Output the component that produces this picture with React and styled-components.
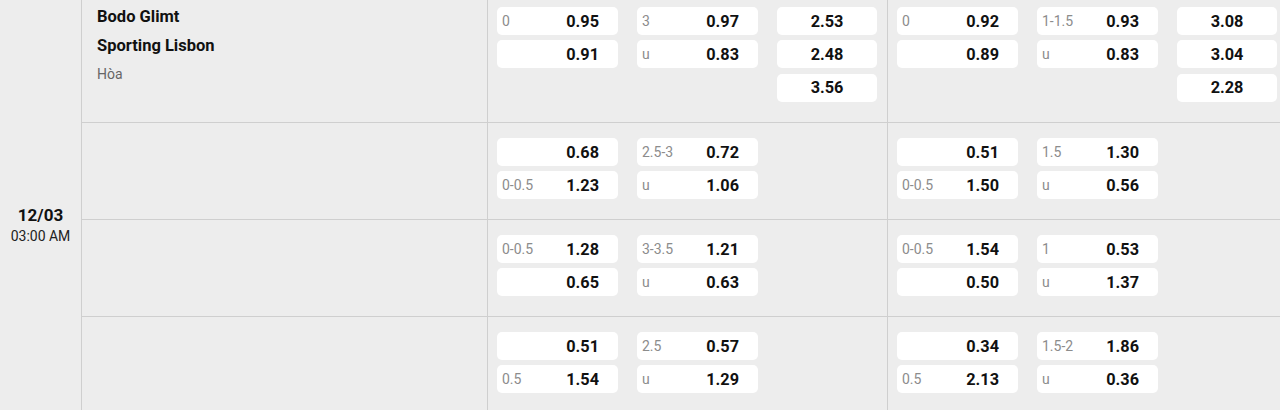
import React from "react";
import styled, { createGlobalStyle } from "styled-components";

const Global = createGlobalStyle`
  html, body { margin: 0; padding: 0; background: #ededed; }
  body { font-family: Roboto, "Liberation Sans", Arial, sans-serif; color: #111; }
  * { box-sizing: border-box; }
`;

const Page = styled.div`
  display: flex;
  width: 1280px;
  height: 410px;
  overflow: hidden;
  background: #ededed;
`;

const DateCol = styled.div`
  flex: 0 0 81px;
  display: flex;
  flex-direction: column;
  align-items: center;
  padding-top: 204px;
`;

const DateDay = styled.div`
  font-size: 17px;
  font-weight: 700;
  line-height: 23px;
  color: #111;
`;

const DateTime = styled.div`
  font-size: 14px;
  line-height: 18px;
  color: #222;
`;

const Rows = styled.div`
  flex: 1;
  display: flex;
  flex-direction: column;
  min-width: 0;
`;

const Row = styled.div`
  display: grid;
  grid-template-columns: 406px 400px 400px;
  height: ${(p) => p.$h}px;
  flex: 0 0 auto;
  border-bottom: 1px solid #cfcfcf;
`;

const TeamCell = styled.div`
  border-left: 1px solid #cfcfcf;
  padding: 2px 0 0 15px;
`;

const TeamName = styled.div`
  font-size: 16.5px;
  font-weight: 700;
  line-height: 29px;
  color: #111;
`;

const DrawLabel = styled.div`
  font-size: 14px;
  line-height: 29px;
  color: #666;
`;

const MarketCell = styled.div`
  border-left: 1px solid #cfcfcf;
  display: grid;
  grid-template-columns: 121px 121px 100px;
  column-gap: 19px;
  align-items: start;
  padding: ${(p) => p.$top}px 0 0 9px;
`;

const OddsCol = styled.div`
  display: flex;
  flex-direction: column;
  gap: 5.4px;
`;

const OddBox = styled.div`
  height: 28px;
  background: #fff;
  border-radius: 5px;
  display: flex;
  align-items: center;
  justify-content: ${(p) => (p.$center ? "center" : "space-between")};
  padding: ${(p) => (p.$center ? "0" : "0 19px 0 5px")};
`;

const OddLabel = styled.span`
  font-size: 14px;
  color: #8c8c8c;
`;

const OddValue = styled.span`
  font-size: 16.3px;
  font-weight: 700;
  color: #111;
`;

const rows = [
  {
    h: 123,
    top: 7,
    teams: true,
    markets: [
      {
        a: [["0", "0.95"], ["", "0.91"]],
        b: [["3", "0.97"], ["u", "0.83"]],
        c: ["2.53", "2.48", "3.56"],
      },
      {
        a: [["0", "0.92"], ["", "0.89"]],
        b: [["1-1.5", "0.93"], ["u", "0.83"]],
        c: ["3.08", "3.04", "2.28"],
      },
    ],
  },
  {
    h: 97,
    top: 15,
    markets: [
      { a: [["", "0.68"], ["0-0.5", "1.23"]], b: [["2.5-3", "0.72"], ["u", "1.06"]] },
      { a: [["", "0.51"], ["0-0.5", "1.50"]], b: [["1.5", "1.30"], ["u", "0.56"]] },
    ],
  },
  {
    h: 97,
    top: 15,
    markets: [
      { a: [["0-0.5", "1.28"], ["", "0.65"]], b: [["3-3.5", "1.21"], ["u", "0.63"]] },
      { a: [["0-0.5", "1.54"], ["", "0.50"]], b: [["1", "0.53"], ["u", "1.37"]] },
    ],
  },
  {
    h: 97,
    top: 15,
    markets: [
      { a: [["", "0.51"], ["0.5", "1.54"]], b: [["2.5", "0.57"], ["u", "1.29"]] },
      { a: [["", "0.34"], ["0.5", "2.13"]], b: [["1.5-2", "1.86"], ["u", "0.36"]] },
    ],
  },
];

function Pair({ items }) {
  return (
    <OddsCol>
      {items.map(([l, v], i) => (
        <OddBox key={i}>
          <OddLabel>{l}</OddLabel>
          <OddValue>{v}</OddValue>
        </OddBox>
      ))}
    </OddsCol>
  );
}

function Market({ m, top }) {
  return (
    <MarketCell $top={top}>
      <Pair items={m.a} />
      <Pair items={m.b} />
      {m.c ? (
        <OddsCol>
          {m.c.map((v, i) => (
            <OddBox key={i} $center>
              <OddValue>{v}</OddValue>
            </OddBox>
          ))}
        </OddsCol>
      ) : (
        <div />
      )}
    </MarketCell>
  );
}

export default function App() {
  return (
    <>
      <Global />
      <Page>
        <DateCol>
          <DateDay>12/03</DateDay>
          <DateTime>03:00 AM</DateTime>
        </DateCol>
        <Rows>
          {rows.map((r, i) => (
            <Row key={i} $h={r.h}>
              <TeamCell>
                {r.teams && (
                  <>
                    <TeamName>Bodo Glimt</TeamName>
                    <TeamName>Sporting Lisbon</TeamName>
                    <DrawLabel>Hòa</DrawLabel>
                  </>
                )}
              </TeamCell>
              {r.markets.map((m, j) => (
                <Market key={j} m={m} top={r.top} />
              ))}
            </Row>
          ))}
        </Rows>
      </Page>
    </>
  );
}
